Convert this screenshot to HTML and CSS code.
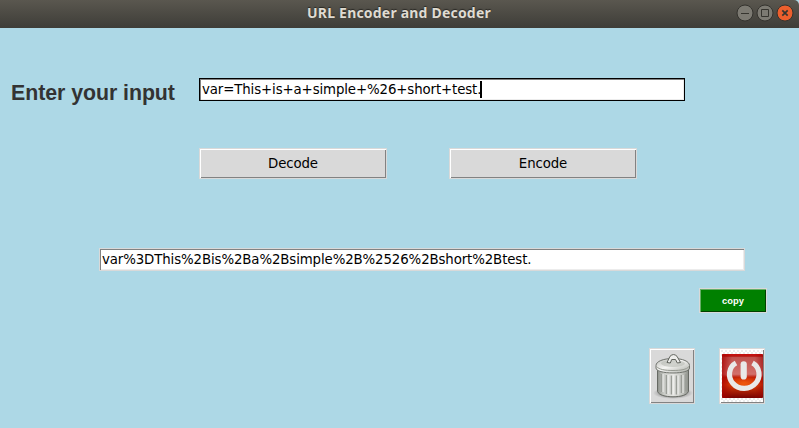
FILE: index.html
```html
<!DOCTYPE html>
<html lang="en">
<head>
<meta charset="utf-8">
<title>URL Encoder and Decoder</title>
<link rel="stylesheet" href="styles.css">
</head>
<body>
<div class="window">
  <header class="titlebar">
    <h1 class="title">URL Encoder and Decoder</h1>
    <div class="controls">
      <svg class="control" viewBox="0 0 18 18"><circle class="disc" cx="9" cy="9" r="8"/><path class="mark" d="M5 9.500h8"/></svg>
      <svg class="control" viewBox="0 0 18 18"><circle class="disc" cx="9" cy="9" r="8"/><path class="mark" d="M5.500 5.500h7v7h-7z"/></svg>
      <svg class="control" viewBox="0 0 18 18"><circle class="disc close" cx="9" cy="9" r="8"/><path class="mark cross" d="M6.300 6.300l5.400 5.400M11.700 6.300l-5.400 5.400"/></svg>
    </div>
  </header>
  <main class="content">
    <div class="row input-row">
      <label class="label">Enter your input</label>
      <div class="entry focused"><span class="entry-text">var=This+is+a+simple+%26+short+test.</span><i class="caret"></i></div>
    </div>
    <div class="row action-row">
      <button class="button">Decode</button>
      <button class="button">Encode</button>
    </div>
    <div class="entry result"><span class="entry-text">var%3DThis%2Bis%2Ba%2Bsimple%2B%2526%2Bshort%2Btest.</span></div>
    <button class="button copy">copy</button>
    <div class="row tool-row">
      <button class="button tool" aria-label="Clear">
        <svg width="42" height="50" viewBox="0 0 42 50">
          <defs>
            <linearGradient id="can"><stop offset="0" stop-color="#8d908a"/><stop offset=".2" stop-color="#c9cbc6"/><stop offset=".5" stop-color="#e6e6e3"/><stop offset=".8" stop-color="#c2c4bf"/><stop offset="1" stop-color="#8b8e88"/></linearGradient>
            <linearGradient id="lid" x2="1" y2="1"><stop offset="0" stop-color="#b9bbb6"/><stop offset=".45" stop-color="#f6f6f4"/><stop offset="1" stop-color="#a9aca5"/></linearGradient>
            <radialGradient id="shade"><stop offset="0" stop-opacity=".65"/><stop offset="1" stop-opacity="0"/></radialGradient>
          </defs>
          <ellipse cx="22" cy="42" rx="20" ry="6" fill="url(#shade)"/>
          <path d="M6.500 17V40.500C8 44 14 45.800 22 45.800S36 44 37.500 40.500V17z" fill="url(#can)" stroke="#666963"/>
          <path d="M10.500 23v18M15.500 24v19M20.500 24.500v19M25.500 24.500v19M30.500 24v18M35 23v17" stroke="#9a9d97" stroke-width="1.600"/>
          <path d="M12 23v18M17 24v19M22 24.500v19M27 24.500v19M32 24v18" stroke="#fff" stroke-opacity=".6" stroke-width="1.300"/>
          <path d="M5 14.500C5 10.500 12 7.500 22 7.500S38.500 10.500 38.500 14.500v2.500c0 3-7 5-16.500 5S5 20 5 17z" fill="url(#lid)" stroke="#70736d"/>
          <path d="M5.500 15.500C8 18.500 14 19.500 22 19.500S35.500 18.500 38 15.500" fill="none" stroke="#969991"/>
          <ellipse cx="22" cy="12.500" rx="12" ry="3.500" fill="#b8bbb4" opacity=".6"/>
          <path d="M16 11.500L19 5.300Q22.500 1.800 26 5.300L29.500 11.500L26.300 12L24.500 8.500H20.700L19.300 12z" fill="#eeeeec" stroke="#60635d"/>
        </svg>
      </button>
      <button class="button tool" aria-label="Quit">
        <svg width="42" height="52" viewBox="0 0 42 52">
          <defs>
            <pattern id="checks" width="4" height="4" patternUnits="userSpaceOnUse"><path fill="#fff" d="M0 0h4v4H0z"/><path fill="#ececec" d="M0 0h2v2H0zM2 2h2v2H2z"/></pattern>
            <linearGradient id="red" x2="0" y2="1"><stop offset="0" stop-color="#c90d0b"/><stop offset=".05" stop-color="#b81714"/><stop offset=".08" stop-color="#c15450"/><stop offset=".46" stop-color="#d2706b"/><stop offset=".53" stop-color="#bd1906"/><stop offset=".7" stop-color="#d83b08"/><stop offset="1" stop-color="#780202"/></linearGradient>
            <linearGradient id="edge"><stop offset="0" stop-color="#a80000" stop-opacity=".75"/><stop offset=".25" stop-color="#a80000" stop-opacity="0"/><stop offset=".8" stop-color="#900" stop-opacity="0"/><stop offset="1" stop-color="#900" stop-opacity=".55"/></linearGradient>
            <radialGradient id="glow"><stop offset="0" stop-color="#ff6c10"/><stop offset="1" stop-color="#ff6c10" stop-opacity="0"/></radialGradient>
          </defs>
          <path fill="url(#checks)" d="M0 0h42v52H0z"/>
          <rect x="1" y="4" width="41" height="44" rx="1" fill="url(#red)"/>
          <ellipse cx="23" cy="33" rx="18" ry="8" fill="url(#glow)" opacity=".65"/>
          <rect x="1" y="4" width="41" height="44" rx="1" fill="url(#edge)"/>
          <path d="M15 13C7.500 17 6.500 27 11.800 33.200C17.500 40 29 40 34.700 33.200C40 27 39 17 31.500 13" fill="none" stroke="#e9e9e9" stroke-width="5.200"/>
          <path d="M22.700 14.300V26.500" stroke="#e9e9e9" stroke-width="6.200" stroke-linecap="round"/>
        </svg>
      </button>
    </div>
  </main>
</div>
</body>
</html>
```
FILE: styles.css
```css
* { box-sizing: border-box; }
body { margin: 0; background: #add8e6; }
.window { width: 799px; height: 428px; overflow: hidden; background: #add8e6; }
.titlebar {
  display: grid;
  grid-template-columns: 1fr auto 1fr;
  align-items: center;
  height: 28px;
  padding: 0 5px 2px 0;
  border-radius: 0 5px 0 0;
  background: linear-gradient(#5a574f, #3e3d38);
}
.title {
  grid-column: 2;
  margin: 0 0 0 4px;
  color: #dfdbd2;
  font: bold 14px/20px "Noto Sans", sans-serif;
  letter-spacing: .2px;
  text-shadow: 0 -1px 1px #292824;
}
.controls { display: flex; justify-content: flex-end; gap: 2px; }
.control { width: 18px; height: 18px; }
.disc { fill: #7c7a72; stroke: #34332e; }
.disc.close { fill: #ec5f2d; }
.mark { fill: none; stroke: #36352f; }
.mark.cross { stroke-width: 1.7; }
.content { display: flex; flex-direction: column; padding-top: 50px; }
.row { display: flex; }
.input-row { height: 23px; }
.label {
  width: 199px;
  padding: 1px 0 0 11px;
  color: #333;
  font: bold 21.33px/29px "Liberation Sans", sans-serif;
  letter-spacing: -.05px;
  white-space: nowrap;
}
.entry {
  display: flex;
  align-items: center;
  height: 23px;
  padding-left: 2px;
  border: 1px solid #d9d9d9;
  background: #fff;
  box-shadow: inset 1px 1px #828282, inset -1px -1px #ececec;
  color: #000;
  font: 13.33px/19px "DejaVu Sans", sans-serif;
  letter-spacing: -.115px;
  white-space: nowrap;
}
.focused { width: 486px; border-color: #000; }
.caret { width: 2px; height: 17px; margin-left: -1px; background: #000; }
.action-row { gap: 62px; margin: 47px 0 0 199px; }
.button {
  width: 188px;
  height: 31px;
  padding: 0;
  border: 1px solid #d9d9d9;
  border-radius: 0;
  background: #d9d9d9;
  box-shadow: inset 1px 1px #fff, inset -1px -1px #828282;
  color: #000;
  font: 13.33px/19px "DejaVu Sans", sans-serif;
  letter-spacing: -.12px;
}
.result { width: 646px; margin: 69px 0 0 99px; }
.copy {
  width: 68px;
  height: 25px;
  padding-top: 1px;
  margin: 17px 0 0 699px;
  background: #008000;
  box-shadow: inset 1px 1px #67ae67, inset -1px -1px #004000;
  color: #fff;
  font: bold 9.33px/13px "Liberation Sans", sans-serif;
  letter-spacing: 0;
}
.tool-row { gap: 24px; margin: 35px 0 0 649px; }
.tool {
  display: flex;
  align-items: center;
  justify-content: center;
  width: 46px;
  height: 56px;
}
```
